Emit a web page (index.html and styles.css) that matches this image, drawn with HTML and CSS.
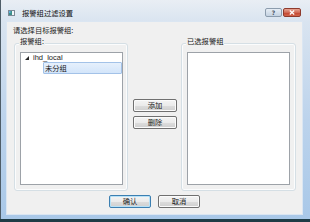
FILE: index.html
```html
<!DOCTYPE html>
<html lang="zh-CN">
<head>
<meta charset="utf-8">
<link rel="stylesheet" href="styles.css">
</head>
<body>
<div class="window">
  <div class="titlebar">
    <svg class="app-icon" width="7" height="6" viewBox="0 0 7 6">
      <rect x="0.5" y="0.5" width="6" height="5" fill="#f4f7fa" stroke="#7d8a96"/>
      <rect x="1" y="1" width="3" height="4" fill="#3c8f8a"/>
      <rect x="1" y="1" width="1.5" height="2" fill="#5fb0e0"/>
    </svg>
    <span class="title">报警组过滤设置</span>
    <div class="caption-btns">
      <span class="cap help">?</span>
      <span class="cap close">
        <svg width="6" height="5" viewBox="0 0 6 5"><path d="M0.8 0.6 L5.2 4.4 M5.2 0.6 L0.8 4.4" stroke="#fff" stroke-width="1.3"/></svg>
      </span>
    </div>
  </div>
  <div class="client">
    <div class="prompt">请选择目标报警组:</div>
    <div class="panes">
      <div class="group">
        <span class="legend">报警组:</span>
        <div class="listbox">
          <div class="tree-row">
            <svg class="expander" width="4" height="4" viewBox="0 0 4 4"><path d="M4 0 L4 4 L0 4 Z" fill="#262626"/></svg>
            <span class="latin">ihd_local</span>
          </div>
          <div class="tree-row child"><span class="sel">未分组</span></div>
        </div>
      </div>
      <div class="mid">
        <button class="btn wide">添加</button>
        <button class="btn wide">删除</button>
      </div>
      <div class="group right">
        <span class="legend">已选报警组</span>
        <div class="listbox"></div>
      </div>
    </div>
    <div class="footer">
      <button class="btn default">确认</button>
      <button class="btn">取消</button>
    </div>
  </div>
</div>
</body>
</html>
```

FILE: styles.css
```css
* { box-sizing: border-box; }
html, body {
  margin: 0;
  padding: 0;
}
body {
  width: 310px;
  height: 222px;
  background: #1f3c46;
  overflow: hidden;
  font-family: "Noto Sans CJK SC", "DejaVu Sans", sans-serif;
  font-size: 7.3px;
  color: #1a1a1a;
}
.window {
  width: 310px;
  height: 219px;
  border-left: 1px solid #4f5d68;
  padding: 0 8px 5px 6px;
  background: linear-gradient(#e9eef4 0px, #d9e4f0 22px, #bcd3ec 120px, #a9c8e8 219px);
  display: flex;
  flex-direction: column;
}
.titlebar {
  height: 22px;
  padding-top: 4px;
  display: flex;
  align-items: center;
}
.app-icon {
  margin-left: 1px;
  flex: none;
}
.title {
  margin-left: 7px;
  line-height: 9px;
  color: #101010;
}
.caption-btns {
  margin-left: auto;
  margin-right: 1px;
  display: flex;
  gap: 1px;
  align-self: flex-start;
  margin-top: 4px;
}
.cap {
  height: 9px;
  border-radius: 2px;
  display: flex;
  align-items: center;
  justify-content: center;
}
.help {
  width: 17px;
  background: linear-gradient(#e6edf5, #c4d2e1);
  border: 1px solid #8c9cad;
  font-family: "DejaVu Sans", sans-serif;
  font-size: 6px;
  font-weight: bold;
  color: #4a5664;
  line-height: 7px;
}
.close {
  width: 18px;
  background: linear-gradient(#e8a493, #d06a55 50%, #c2432e 51%, #d2664c);
  border: 1px solid #8e3a2c;
}
.client {
  height: 192px;
  background: #f0f0f0;
  box-shadow: 0 0 0 1px #dbe6f2;
  padding-top: 4px;
  display: flex;
  flex-direction: column;
}
.prompt {
  margin-left: 6px;
  line-height: 9px;
  height: 9px;
}
.panes {
  margin-top: 8px;
  margin-left: 7px;
  height: 148px;
  display: flex;
}
.group {
  position: relative;
  width: 114px;
  height: 148px;
  border: 1px solid #d5dfe5;
  border-radius: 3px;
  box-shadow: inset 0 0 0 1px #fbfcfd;
  padding: 8px 0 0 5px;
}
.group.right {
  width: 115px;
  margin-left: 4px;
}
.legend {
  position: absolute;
  left: 4px;
  top: -7px;
  padding: 0 1px;
  line-height: 9px;
  background: #f0f0f0;
}
.listbox {
  width: 103px;
  height: 133px;
  background: #fff;
  border: 1px solid #9da2a8;
}
.tree-row {
  height: 9px;
  display: flex;
  align-items: center;
  line-height: 9px;
}
.latin {
  font-family: "Liberation Sans", "Noto Sans CJK SC", sans-serif;
  font-size: 7.5px;
  color: #1a1a1a;
}
.expander {
  margin-left: 4px;
  margin-right: 4px;
  flex: none;
}
.tree-row.child {
  height: 12px;
}
.sel {
  margin-left: 22px;
  width: 79px;
  height: 12px;
  line-height: 10px;
  padding-left: 1px;
  border: 1px solid #a3c2e8;
  border-radius: 1px;
  background: linear-gradient(#e6f0fc, #d3e5fa);
}
.mid {
  width: 44px;
  margin-left: 5px;
  padding-top: 56px;
  display: flex;
  flex-direction: column;
  gap: 4px;
}
.btn {
  width: 42px;
  height: 13px;
  padding: 0;
  margin: 0;
  font-family: "Noto Sans CJK SC", sans-serif;
  font-size: 7.3px;
  line-height: 11px;
  color: #1a1a1a;
  border: 1px solid #707070;
  border-radius: 2px;
  background: linear-gradient(#f4f4f4 0%, #ebebeb 50%, #dddddd 51%, #cfcfcf 100%);
  box-shadow: inset 0 0 0 1px #fbfbfb;
}
.btn.wide {
  width: 44px;
}
.btn.default {
  border-color: #3c7fb1;
  box-shadow: inset 0 0 0 1px #b7e2f8;
}
.footer {
  margin-top: 4px;
  display: flex;
  justify-content: center;
  gap: 7px;
}
```
